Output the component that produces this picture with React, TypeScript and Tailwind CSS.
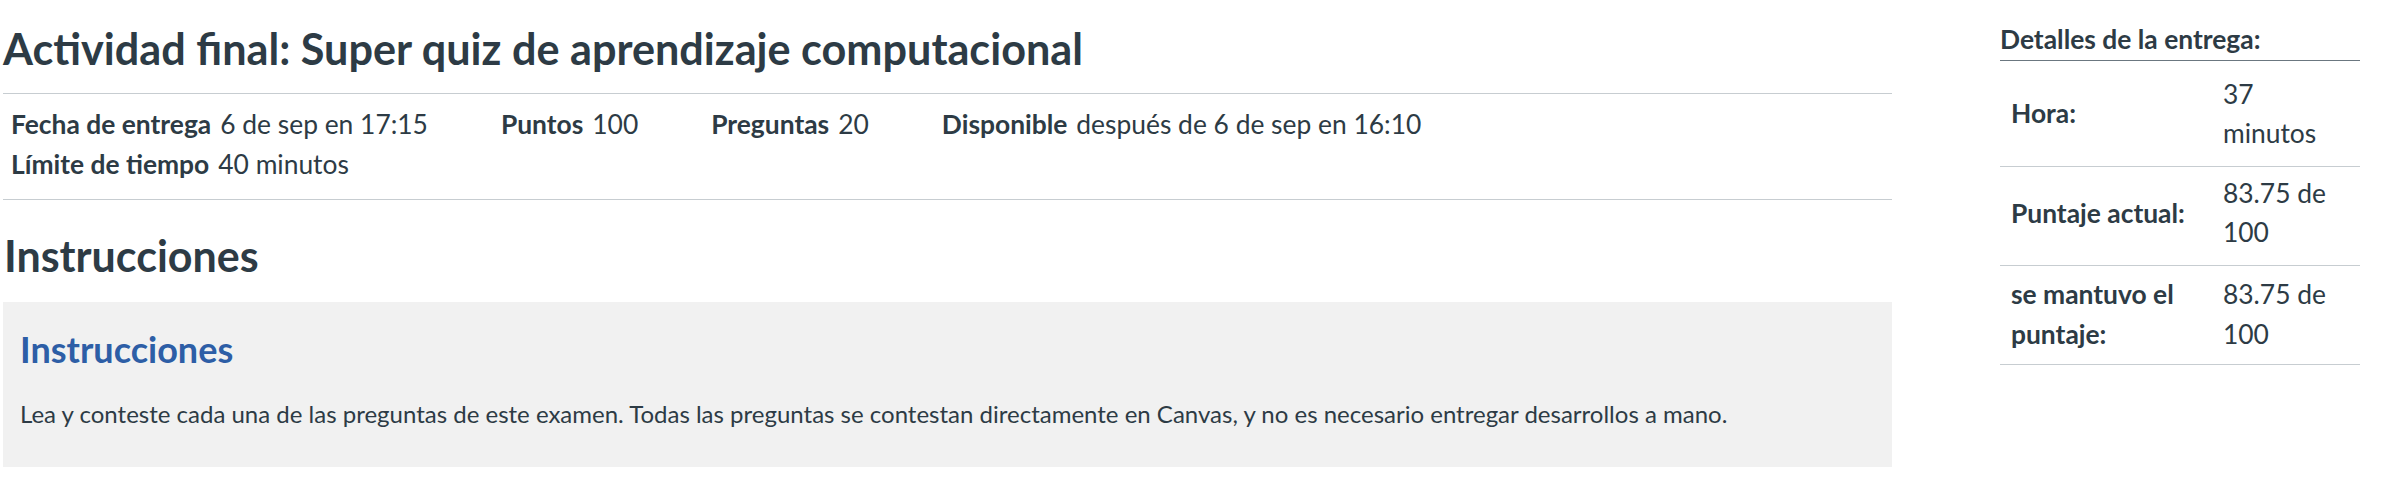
export default function App() {
  const meta = [
    { label: "Fecha de entrega", value: "6 de sep en 17:15" },
    { label: "Puntos", value: "100" },
    { label: "Preguntas", value: "20" },
    { label: "Disponible", value: "después de 6 de sep en 16:10" },
  ];

  // pad: cell padding per row, tuned to the reference row lines
  const details = [
    { label: "Hora:", value: "37 minutos", pad: "pt-[14px] pb-[12px]" },
    { label: "Puntaje actual:", value: "83.75 de 100", pad: "pt-[7px] pb-[12px]" },
    { label: "se mantuvo el puntaje:", value: "83.75 de 100", pad: "pt-[9px] pb-[10px]" },
  ];

  return (
    <div className="flex bg-white font-['Lato',sans-serif] text-[#2d3b45]">
      {/* Main column */}
      <main className="ml-[3px] w-[1889px]">
        <h1 className="pt-[22px] pb-[19px] text-[43.2px] font-bold leading-[52px]">
          Actividad final: Super quiz de aprendizaje computacional
        </h1>

        <div className="border-y border-[#c7cdd1] pt-[11px] pb-[15px] pl-[8px] text-[26.4px] leading-[39.6px]">
          <div className="flex">
            {meta.map((m) => (
              <div key={m.label} className="mr-[73px] whitespace-nowrap">
                <span className="mr-[9px] font-bold">{m.label}</span>
                <span>{m.value}</span>
              </div>
            ))}
          </div>
          <div className="whitespace-nowrap">
            <span className="mr-[9px] font-bold">Límite de tiempo</span>
            <span>40 minutos</span>
          </div>
        </div>

        <h2 className="mt-[30px] mb-[20px] ml-[1px] text-[43px] font-bold leading-[52px]">Instrucciones</h2>

        <section className="bg-[#f1f1f1] pt-[25px] pb-[35px] pl-[17px]">
          <h3 className="text-[36px] font-bold leading-[44px] text-[#2d5ea6]">Instrucciones</h3>
          <p className="mt-[25px] text-[24px] leading-[36px]">
            Lea y conteste cada una de las preguntas de este examen. Todas las preguntas se contestan directamente en
            Canvas, y no es necesario entregar desarrollos a mano.
          </p>
        </section>
      </main>

      {/* Sidebar */}
      <aside className="ml-[108px] w-[360px]">
        <h4 className="border-b border-[#6b7780] pt-[20px] pb-0 text-[26.4px] font-bold leading-[39.6px]">
          Detalles de la entrega:
        </h4>
        <div className="text-[26.4px] leading-[39.6px]">
          {details.map((d) => (
            <div key={d.label} className="grid grid-cols-[212px_148px] border-b border-[#c7cdd1]">
              <div className={["self-center px-[11px] font-bold", d.pad].join(" ")}>{d.label}</div>
              <div className={["px-[11px]", d.pad].join(" ")}>
                <div className="w-[112px]">{d.value}</div>
              </div>
            </div>
          ))}
        </div>
      </aside>
    </div>
  );
}
